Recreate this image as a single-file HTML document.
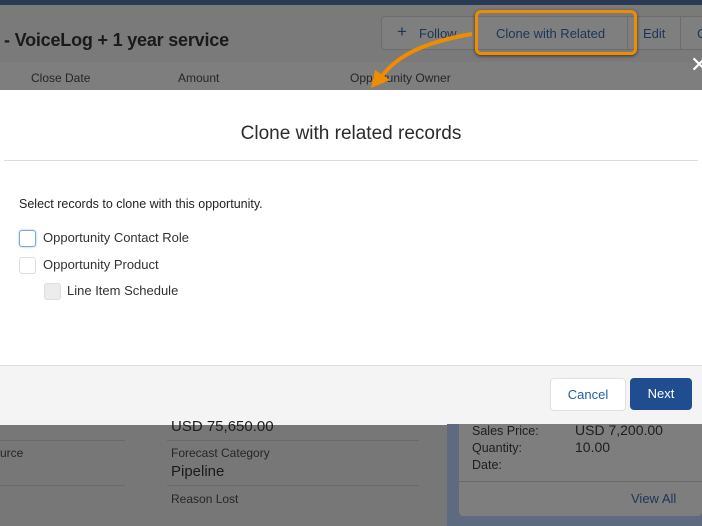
<!DOCTYPE html>
<html><head><style>
body{margin:0;width:702px;height:526px;overflow:hidden;position:relative;background:#777;font-family:"Liberation Sans",sans-serif;}
.a{position:absolute;}
</style></head><body>
<div class="a" style="left:0;top:0;width:702px;height:5px;background:#2a3a52"></div>
<div class="a" style="left:0;top:5px;width:702px;height:57px;background:#7a7a7a"></div>
<div class="a" style="left:0;top:62px;width:702px;height:28px;background:#7e7e7e"></div>
<div class="a" style="left:4px;top:30px;font-size:18px;font-weight:bold;color:#1a1a1a;letter-spacing:-0.2px">- VoiceLog + 1 year service</div>
<div class="a" style="left:381px;top:16px;width:330px;height:32px;background:#7f7f7f;border:1px solid #6c6c6c;border-radius:4px"></div>
<div class="a" style="left:627px;top:17px;width:1px;height:32px;background:#6c6c6c"></div>
<div class="a" style="left:680px;top:17px;width:1px;height:32px;background:#6c6c6c"></div>
<div class="a" style="left:397px;top:22px;font-size:17px;color:#1d3558">+</div>
<div class="a" style="left:419px;top:26px;font-size:13px;color:#1d3558">Follow</div>
<div class="a" style="left:496px;top:26px;font-size:13px;color:#1d3558">Clone with Related</div>
<div class="a" style="left:643px;top:26px;font-size:13px;color:#1d3558">Edit</div>
<div class="a" style="left:697px;top:26px;font-size:13px;color:#1d3558">C</div>
<div class="a" style="left:31px;top:71px;font-size:12px;color:#262626">Close Date</div>
<div class="a" style="left:178px;top:71px;font-size:12px;color:#262626">Amount</div>
<div class="a" style="left:350px;top:71px;font-size:12px;color:#262626">Opportunity Owner</div>
<div class="a" style="left:690px;top:52px;font-size:22px;color:#fff">✕</div>
<div class="a" style="left:475px;top:10px;width:156px;height:39px;border:3px solid #f08c00;border-radius:6px;box-shadow:0 1px 3px #333"></div>
<svg class="a" style="left:0;top:0" width="702" height="100"><path d="M472 34 C425 42 398 55 382 76" stroke="#f08c00" stroke-width="4" fill="none"/><path d="M371 88 L375 70 L390 80 Z" fill="#f08c00"/></svg>
<!-- modal -->
<div class="a" style="left:0;top:90px;width:702px;height:275px;background:#fff"></div>
<div class="a" style="left:0;top:123px;width:702px;text-align:center;font-size:19px;color:#2b2b2b">Clone with related records</div>
<div class="a" style="left:4px;top:160px;width:694px;height:1px;background:#dcdcdc"></div>
<div class="a" style="left:19px;top:197px;font-size:12.5px;color:#222">Select records to clone with this opportunity.</div>
<div class="a" style="left:19px;top:230px;width:15px;height:15px;border:1px solid #7fa7d6;border-radius:3px;box-shadow:0 0 2px #9cc0ec"></div>
<div class="a" style="left:43px;top:230px;font-size:13px;color:#333">Opportunity Contact Role</div>
<div class="a" style="left:19px;top:257px;width:15px;height:15px;border:1px solid #ddd;border-radius:3px"></div>
<div class="a" style="left:43px;top:257px;font-size:13px;color:#333">Opportunity Product</div>
<div class="a" style="left:44px;top:283px;width:15px;height:15px;background:#ececec;border:1px solid #ddd;border-radius:3px"></div>
<div class="a" style="left:67px;top:283px;font-size:13px;color:#333">Line Item Schedule</div>
<div class="a" style="left:0;top:365px;width:702px;height:59px;background:#f4f4f4;border-top:1px solid #ddd"></div>
<div class="a" style="left:550px;top:378px;width:74px;height:31px;background:#fff;border:1px solid #e0e0e0;border-radius:4px;text-align:center;line-height:31px;font-size:13px;color:#1d5fa8">Cancel</div>
<div class="a" style="left:630px;top:378px;width:62px;height:32px;background:#1f4d8f;border-radius:4px;text-align:center;line-height:32px;font-size:13px;color:#fff">Next</div>
<!-- bottom -->
<div class="a" style="left:171px;top:418px;font-size:15px;color:#1e1e1e">USD 75,650.00</div>
<div class="a" style="left:0;top:440px;width:125px;height:1px;background:#6a6a6a"></div>
<div class="a" style="left:167px;top:440px;width:252px;height:1px;background:#6a6a6a"></div>
<div class="a" style="left:0;top:446px;font-size:12px;color:#262626">urce</div>
<div class="a" style="left:171px;top:446px;font-size:12px;color:#262626">Forecast Category</div>
<div class="a" style="left:171px;top:463px;font-size:15px;color:#1a1a1a">Pipeline</div>
<div class="a" style="left:0;top:485px;width:125px;height:1px;background:#6a6a6a"></div>
<div class="a" style="left:167px;top:485px;width:252px;height:1px;background:#6a6a6a"></div>
<div class="a" style="left:171px;top:492px;font-size:12px;color:#262626">Reason Lost</div>
<div class="a" style="left:447px;top:424px;width:255px;height:102px;background:#5d6a7f"></div>
<div class="a" style="left:459px;top:424px;width:243px;height:92px;background:#7e7e7e;border-radius:0 0 4px 4px"></div>
<div class="a" style="left:472px;top:423px;font-size:12.5px;color:#1e1e1e;line-height:17px">Sales Price:<br>Quantity:<br>Date:</div>
<div class="a" style="left:575px;top:422px;font-size:14px;color:#1e1e1e;line-height:17px">USD 7,200.00<br>10.00</div>
<div class="a" style="left:459px;top:481px;width:243px;height:1px;background:#6a6a6a"></div>
<div class="a" style="left:631px;top:491px;font-size:13px;color:#1d3558">View All</div>
</body></html>
